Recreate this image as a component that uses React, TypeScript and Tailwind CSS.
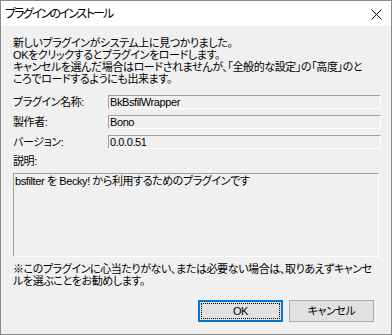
import React from "react";

const font = "[font-family:'Liberation_Sans','Noto_Sans_CJK_JP',sans-serif] [font-feature-settings:'palt']";

function Field({ value }: { value: string }) {
  return (
    <div className="w-[273px] h-[14px] border-t border-l border-[#a0a0a0] border-b-white border-r-white border-b border-r pl-[1px] leading-[12px] whitespace-nowrap">
      {value}
    </div>
  );
}

export default function App() {
  return (
    <div className={`w-[392px] h-[335px] flex flex-col bg-[#f0f0f0] border border-[#8a8a8a] text-[11px] tracking-[-0.4px] text-black ${font}`}>
      <div className="h-[25px] bg-white flex items-center justify-between pl-[4px] pr-[9px] shrink-0">
        <span className="text-[12px] tracking-[-1.8px] leading-[12px] mt-[1px]">プラグインのインストール</span>
        <svg width="11" height="11" viewBox="0 0 11 11" className="mt-[1px]">
          <path d="M0.5 0.5 L10.5 10.5 M10.5 0.5 L0.5 10.5" stroke="#000" strokeWidth="1" />
        </svg>
      </div>
      <div className="flex flex-col pl-[12px] pt-[11px]">
        <div className="leading-[12px] whitespace-nowrap">
          <div>新しいプラグインがシステム上に見つかりました。</div>
          <div>OKをクリックするとプラグインをロードします。</div>
          <div>キャンセルを選んだ場合はロードされませんが、「全般的な設定」の「高度」のと</div>
          <div>ころでロードするようにも出来ます。</div>
        </div>
        <div className="mt-[10px] flex flex-col gap-[6px]">
          <div className="flex items-center">
            <span className="w-[95px] leading-[12px]">プラグイン名称:</span>
            <Field value="BkBsfilWrapper" />
          </div>
          <div className="flex items-center">
            <span className="w-[95px] leading-[12px]">製作者:</span>
            <Field value="Bono" />
          </div>
          <div className="flex items-center">
            <span className="w-[95px] leading-[12px]">バージョン:</span>
            <Field value="0.0.0.51" />
          </div>
        </div>
        <div className="mt-[6px] leading-[12px]">説明:</div>
        <div className="mt-[6px] w-[366px] h-[84px] border-t border-l border-[#a0a0a0] border-b border-r border-b-white border-r-white leading-[12px] pt-[1px] pl-[1px]">
          bsfilter を Becky! から利用するためのプラグインです
        </div>
        <div className="mt-[6px] leading-[12px] whitespace-nowrap">
          <div>※このプラグインに心当たりがない、または必要ない場合は、取りあえずキャンセ</div>
          <div>ルを選ぶことをお勧めします。</div>
        </div>
        <div className="mt-[13px] flex justify-end gap-[6px] pr-[17px]">
          <div className="relative w-[85px] h-[22px] border-2 border-[#0078d7] bg-[#e1e1e1] flex items-center justify-center leading-[12px]">
            <span className="absolute inset-[1px] border border-dotted border-black" />
            OK
          </div>
          <div className="w-[85px] h-[22px] border border-[#adadad] bg-[#e1e1e1] flex items-center justify-center leading-[12px]">
            キャンセル
          </div>
        </div>
      </div>
    </div>
  );
}
